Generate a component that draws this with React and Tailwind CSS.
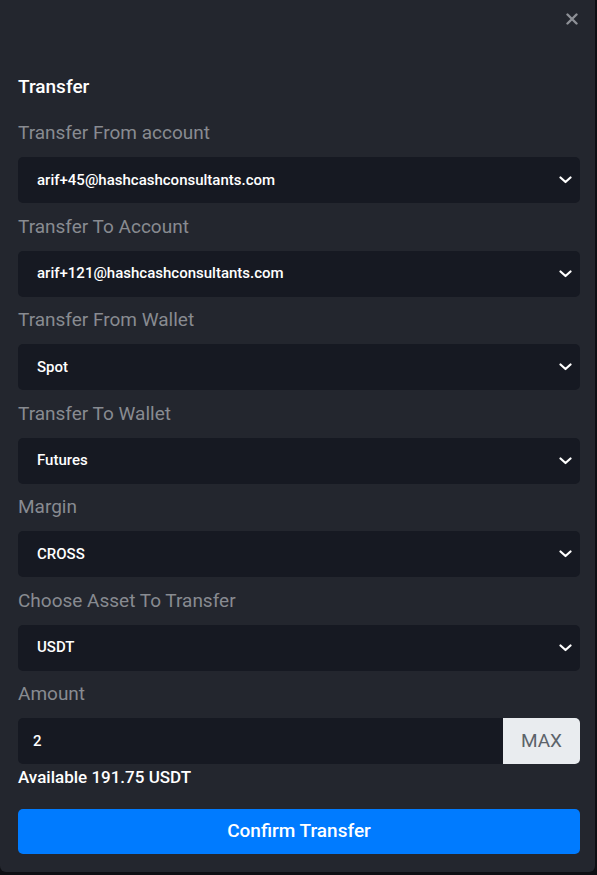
import React from "react";

const Chevron = () => (
  <svg className="w-[13px] h-[8px]" viewBox="0 0 13 8" fill="none">
    <path d="M1.5 1.5l5 4.5 5-4.5" stroke="#ffffff" strokeWidth="2.2" strokeLinecap="round" strokeLinejoin="round" />
  </svg>
);

const SelectField = ({ label, value }) => (
  <div className="flex flex-col">
    <label className="text-[19px] leading-[27px] text-[#888b91] mb-[11px]">{label}</label>
    <div className="h-[46px] rounded-[5px] bg-[#161922] flex items-center justify-between pl-[19px] pr-[8px]">
      <span className="text-[15px] font-medium text-white">{value}</span>
      <Chevron />
    </div>
  </div>
);

const fields = [
  ["Transfer From account", "arif+45@hashcashconsultants.com"],
  ["Transfer To Account", "arif+121@hashcashconsultants.com"],
  ["Transfer From Wallet", "Spot"],
  ["Transfer To Wallet", "Futures"],
  ["Margin", "CROSS"],
  ["Choose Asset To Transfer", "USDT"],
];

export default function App() {
  return (
    <div className="w-[597px] h-[875px] bg-[#0e0f14]" style={{ fontFamily: "Roboto, 'Noto Sans', sans-serif" }}>
      <div className="w-[595px] h-[872px] bg-[#23262e] rounded-b-[6px] flex flex-col pl-[18px] pr-[15px]">
        <div className="flex justify-end pt-[13px] pr-[2px]">
          <svg className="w-[12px] h-[12px]" viewBox="0 0 12 12" fill="none">
            <path d="M1.5 1.5l9 9M10.5 1.5l-9 9" stroke="#8d9096" strokeWidth="2.4" strokeLinecap="round" />
          </svg>
        </div>
        <h2 className="mt-[50px] text-[19px] leading-[24px] font-medium text-white">Transfer</h2>
        <div className="mt-[20px] flex flex-col gap-[9.5px]">
          {fields.map(([l, v]) => (
            <SelectField key={l} label={l} value={v} />
          ))}
          <div className="flex flex-col">
            <label className="text-[19px] leading-[27px] text-[#888b91] mb-[11px]">Amount</label>
            <div className="h-[46px] flex">
              <div className="flex-1 bg-[#161922] rounded-l-[5px] flex items-center pl-[15px] text-[15px] font-medium text-white">2</div>
              <div className="w-[77px] bg-[#e9ecef] rounded-r-[5px] flex items-center justify-center text-[19px] text-[#5c636a]">MAX</div>
            </div>
          </div>
        </div>
        <div className="mt-[1px] text-[17px] leading-[24px] font-medium text-white">Available 191.75 USDT</div>
        <button className="mt-[20px] h-[45px] rounded-[5px] bg-[#007bff] text-white text-[19px] font-medium">Confirm Transfer</button>
      </div>
    </div>
  );
}
